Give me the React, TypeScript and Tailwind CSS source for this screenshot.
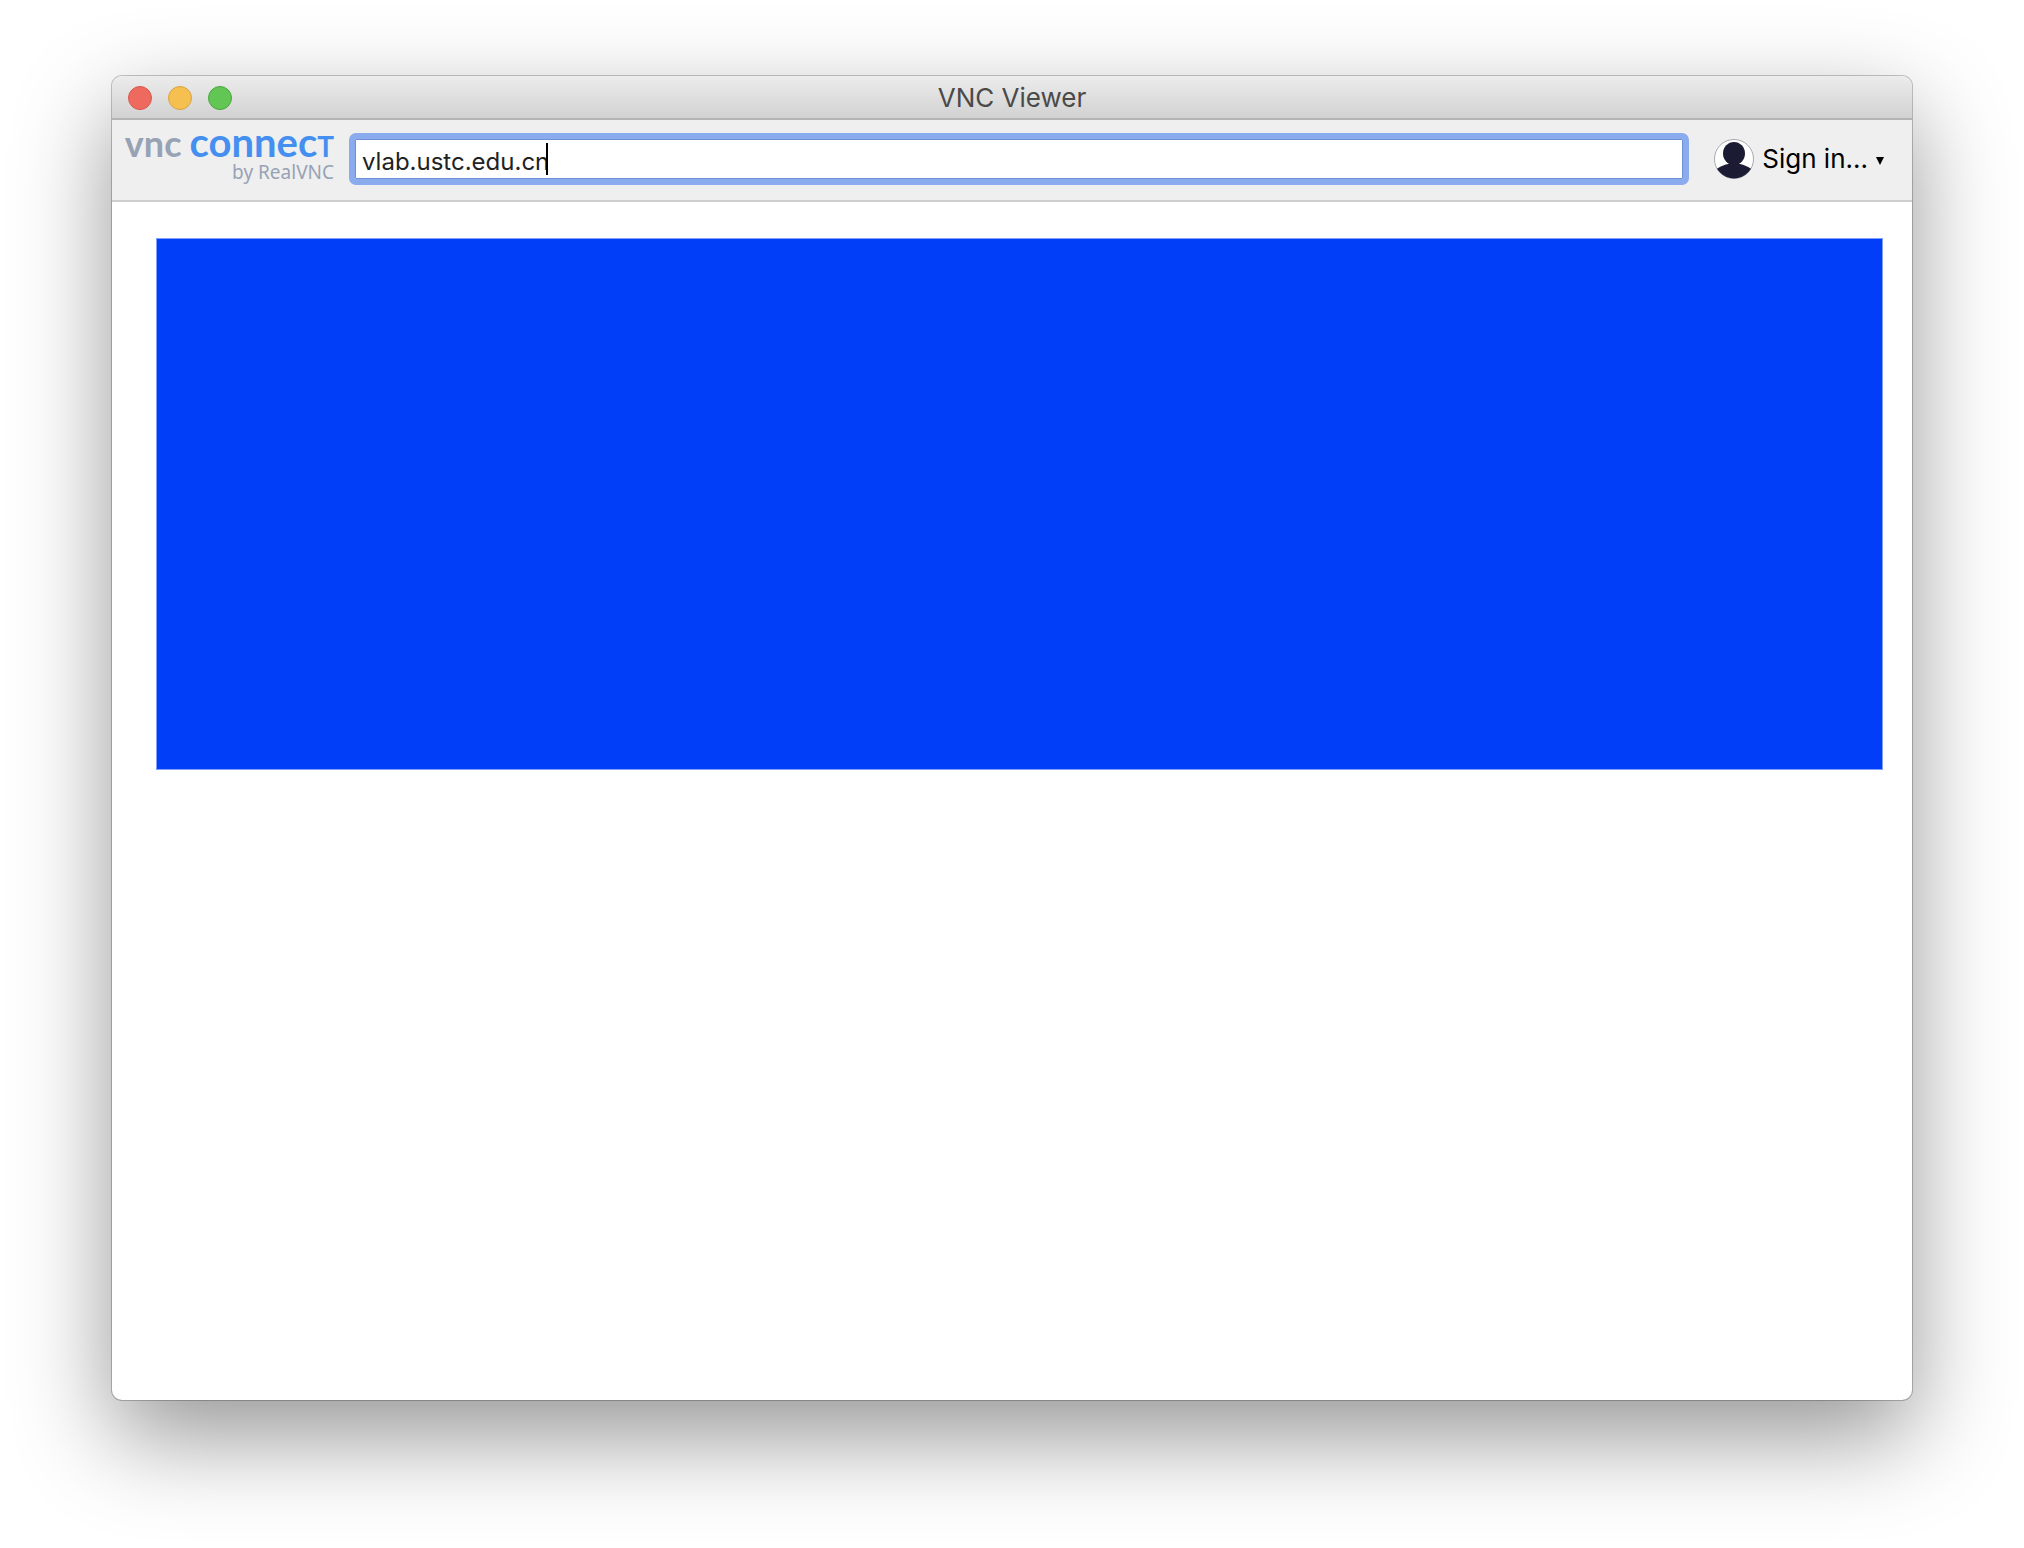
import { useState } from "react";

function TitleBar() {
  return (
    <header className="relative flex h-11 items-center border-b-2 border-[#b4b4b4] bg-gradient-to-b from-[#ececec] to-[#d2d2d2] px-4 pt-0.5">
      <div className="flex gap-4">
        <button aria-label="Close" className="size-6 rounded-full border border-[#d9574e] bg-[#ee6a5f]" />
        <button aria-label="Minimize" className="size-6 rounded-full border border-[#d9a23f] bg-[#f5c04f]" />
        <button aria-label="Zoom" className="size-6 rounded-full border border-[#4aa53d] bg-[#62c655]" />
      </div>
      <h1 className="pointer-events-none absolute inset-x-0 text-center text-[26px] leading-8 text-[#4a4a4a]">
        VNC Viewer
      </h1>
    </header>
  );
}

function Logo() {
  return (
    <div className="flex w-[210px] shrink-0 flex-col items-end pb-0.5 font-['Lato',sans-serif]">
      <div className="flex items-baseline gap-2 text-[40px] leading-6 font-bold">
        <span className="text-[36px] text-[#98a2b5]">vnc</span>
        <span className="text-[#448ff0]">
          connec<span className="text-[28px]">T</span>
        </span>
      </div>
      <div className="font-['Noto_Sans',sans-serif] text-[19px] leading-7 text-[#98a2b5]">by RealVNC</div>
    </div>
  );
}

function Avatar() {
  return (
    <svg viewBox="0 0 40 40" className="size-10" aria-hidden="true">
      <defs>
        <clipPath id="avatar-disc">
          <circle cx="20" cy="20" r="19.5" />
        </clipPath>
      </defs>
      <circle cx="20" cy="20" r="19.5" fill="#fff" stroke="#a8a8b0" />
      <g clipPath="url(#avatar-disc)" fill="#1b1b33">
        <ellipse cx="20" cy="14.5" rx="11" ry="11.5" />
        <path d="M0 32C6 27 12 24.5 20 24.5S34 27 40 32V40H0Z" />
      </g>
    </svg>
  );
}

export default function App() {
  const [address, setAddress] = useState("vlab.ustc.edu.cn");
  return (
    <div className="flex min-h-screen flex-col bg-white px-28 pt-[76px] pb-[148px] font-['Inter',sans-serif]">
      <main className="flex flex-1 flex-col overflow-hidden rounded-[10px] bg-white shadow-[0_0_0_1px_rgba(0,0,0,0.22),0_36px_96px_rgba(0,0,0,0.42)]">
        <TitleBar />
        <div className="flex h-[82px] items-center border-b-2 border-[#cfcfcf] bg-[#efefef] pr-7 pb-0.5 pl-3">
          <Logo />
          <div className="relative ml-[21px] flex-1">
            <input
              aria-label="VNC Server address"
              value={address}
              onChange={(e) => setAddress(e.target.value)}
              className="block h-10 w-full rounded-[1px] border border-[#6d8fd6] bg-white px-1.5 pt-1 text-[24px] text-[#222] outline-6 outline-[#8aacee]"
            />
            <span className="absolute top-1 left-[191px] h-8 w-0.5 bg-black" />
          </div>
          <button className="ml-[31px] flex items-center text-[26px] leading-8 text-black">
            <Avatar />
            <span className="ml-2">Sign in...</span>
            <svg viewBox="0 0 8 12" className="ml-2 h-3 w-2" aria-hidden="true">
              <path d="M0 4H8L4 12Z" fill="#000" />
            </svg>
          </button>
        </div>
        <section className="mt-9 mr-[29px] ml-11 h-[532px] border border-[#809eff] bg-[#003ef8]" aria-label="Connections" />
      </main>
    </div>
  );
}
